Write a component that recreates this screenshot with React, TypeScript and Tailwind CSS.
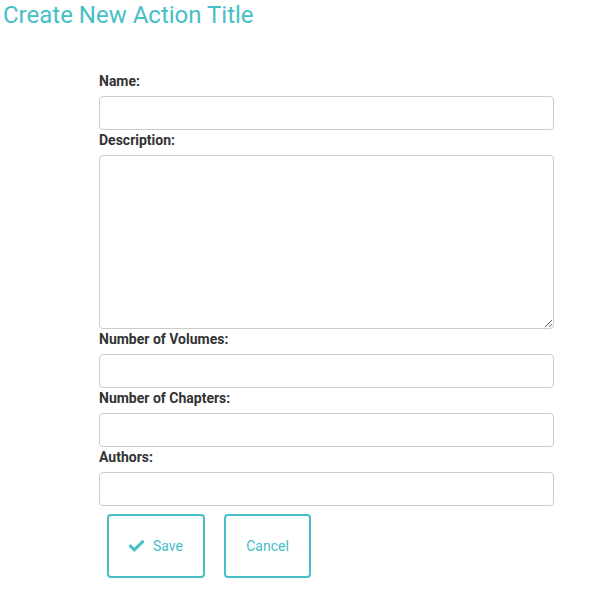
import React from "react";

const fields = [
  { label: "Name:", type: "input" },
  { label: "Description:", type: "textarea" },
  { label: "Number of Volumes:", type: "input" },
  { label: "Number of Chapters:", type: "input" },
  { label: "Authors:", type: "input" },
];

export default function App() {
  return (
    <div className="min-h-[594px] bg-white font-['Roboto',sans-serif] text-[#333]">
      <h1 className="pl-[3px] pt-[1px] text-[24px] leading-[29px] font-normal text-[#46c0c8]">
        Create New Action Title
      </h1>
      <div className="ml-[99px] mt-[41px] w-[455px]">
        {fields.map((f) => (
          <div key={f.label}>
            <label className="block text-[14px] font-bold leading-[20px] mb-[5px]">{f.label}</label>
            {f.type === "input" ? (
              <input
                type="text"
                className="block w-full h-[34px] rounded-[4px] border border-[#ccc] bg-white px-3 text-[14px] outline-none"
              />
            ) : (
              <textarea className="block w-full h-[174px] rounded-[4px] border border-[#ccc] bg-white px-3 py-1.5 text-[14px] outline-none" />
            )}
          </div>
        ))}
        <div className="flex gap-[19px] ml-[8px] mt-[8px]">
          <button className="flex items-center justify-center gap-[9px] w-[98px] h-[64px] rounded-[4px] border-2 border-[#46c0c8] bg-white text-[14px] text-[#46c0c8]">
            <svg width="15" height="12" viewBox="0 0 15 12" fill="none">
              <path d="M1.5 6.2 L5.3 9.8 L13.5 1.8" stroke="#46c0c8" strokeWidth="3" strokeLinecap="square" />
            </svg>
            Save
          </button>
          <button className="flex items-center justify-center w-[87px] h-[64px] rounded-[4px] border-2 border-[#46c0c8] bg-white text-[14px] text-[#46c0c8]">
            Cancel
          </button>
        </div>
      </div>
    </div>
  );
}
